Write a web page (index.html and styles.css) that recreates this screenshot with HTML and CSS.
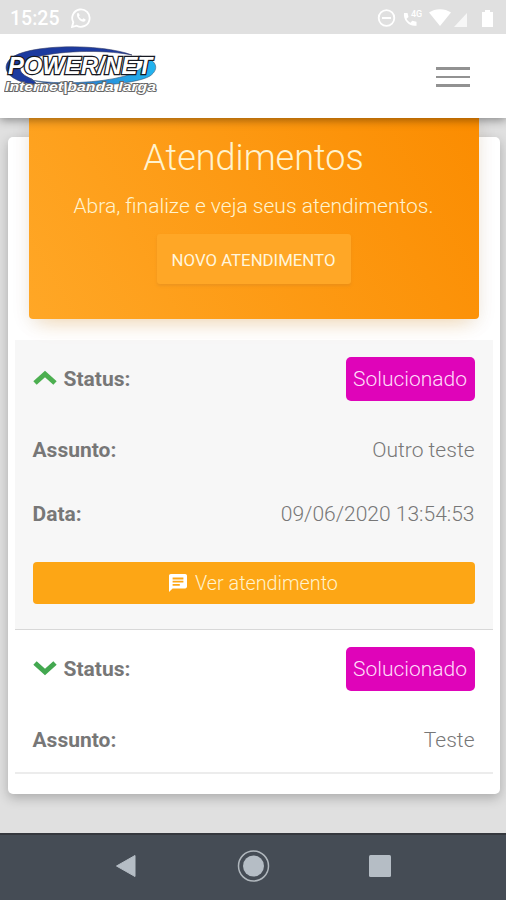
FILE: index.html
```html
<!DOCTYPE html>
<html lang="pt-BR">
<head>
    <meta charset="UTF-8">
    <meta name="viewport" content="width=device-width, initial-scale=1.0">
    <title>Atendimentos</title>
    <link rel="stylesheet" href="styles.css">
</head>
<body>
    <div class="status-bar">
        <span class="clock">15:25</span>
        <svg class="whatsapp" width="20" height="20" viewBox="0 0 20 20">
            <path d="M1 19l1.3-4.7A8.7 8.7 0 1 1 5.7 17.700Z" fill="none" stroke="#fff" stroke-width="1.8"/>
            <path d="M6.200 5.400c1-1 1.700-.5 2.500 1.900l-.8 1.100c.8 1.500 1.900 2.400 3.400 3.100l1.100-1.200c2.500 1 2.700 1.400 1.800 2.700-2.700 2.500-9.400-2.800-8-7.600z" fill="#fff"/>
        </svg>
        <svg class="status-icons" width="120" height="22" viewBox="0 0 120 22">
            <circle cx="11.500" cy="11" r="7.800" fill="none" stroke="#fff" stroke-width="1.8"/>
            <path d="M7 11h9" stroke="#fff" stroke-width="2"/>
            <path d="M29 6h3.500l1 4-2 1.700c1 1.900 2 3 4 4l1.700-2 4.300 1v4C34 20 28 13 29 6z" fill="#fff"/>
            <text x="36" y="10" class="net-label">4G</text>
            <path d="M54 5.500c6-4.500 16-4.500 22 0L65 19z" fill="#fff"/>
            <path d="M79 20L92 6v14z" fill="#fff" opacity=".75"/>
            <path d="M107 5h3V3h5v2h3v15h-11z" fill="#fff"/>
        </svg>
    </div>

    <header class="navbar">
        <svg class="logo" width="156" height="50" viewBox="0 0 156 50">
            <defs>
                <linearGradient id="swoosh" x1="0" x2="1">
                    <stop offset="0" stop-color="#173099"/>
                    <stop offset=".4" stop-color="#2a7fd0"/>
                    <stop offset="1" stop-color="#21b5f0"/>
                </linearGradient>
            </defs>
            <path d="M128 10C96-2 22-1 6 14-6 27 11 38 34 40l-6-6C12 28 12 19 30 13 50 6 98 4 128 10z" fill="#1c3a9f" stroke="#343d66" stroke-width=".6"/>
            <path d="M136 11c17 3 20 13 10 20-15 9-78 14-119 4 26 5 70 3 94-4 19-6 23-14 15-20z" fill="url(#swoosh)" stroke="#345779" stroke-width=".6"/>
            <text x="4" y="29" textLength="144" lengthAdjust="spacingAndGlyphs" class="logo-name">POWER/NET</text>
            <text x="1" y="46" textLength="151" lengthAdjust="spacingAndGlyphs" class="logo-sub">Internet|banda larga</text>
        </svg>
        <div class="menu-toggle">
            <span></span>
            <span></span>
            <span></span>
        </div>
    </header>

    <main class="content">
        <section class="card">
            <div class="card-header">
                <h1>Atendimentos</h1>
                <p>Abra, finalize e veja seus atendimentos.</p>
                <a class="btn-novo" href="#">NOVO ATENDIMENTO</a>
            </div>

            <div class="ticket ticket-open">
                <div class="row row-status">
                    <svg class="chevron" width="24" height="16" viewBox="0 0 24 16">
                        <path d="M2 13L12 4 22 13" fill="none" stroke="#4caf50" stroke-width="5"/>
                    </svg>
                    <strong>Status:</strong>
                    <span class="badge">Solucionado</span>
                </div>
                <div class="row">
                    <strong>Assunto:</strong>
                    <span class="value">Outro teste</span>
                </div>
                <div class="row">
                    <strong>Data:</strong>
                    <span class="value">09/06/2020 13:54:53</span>
                </div>
                <a class="btn-ver" href="#">
                    <svg width="18" height="18" viewBox="2 2 20 20">
                        <path d="M20 2H4c-1.100 0-2 .9-2 2v18l4-4h14c1.100 0 2-.9 2-2V4c0-1.100-.9-2-2-2zM6 6h12v2H6zm0 3.500h12v2H6zM6 13h8v2H6z" fill="#fff" fill-rule="evenodd"/>
                    </svg>
                    Ver atendimento
                </a>
            </div>

            <div class="ticket">
                <div class="row row-status">
                    <svg class="chevron" width="24" height="16" viewBox="0 0 24 16">
                        <path d="M2 3l10 9L22 3" fill="none" stroke="#43a850" stroke-width="5"/>
                    </svg>
                    <strong>Status:</strong>
                    <span class="badge">Solucionado</span>
                </div>
                <div class="row">
                    <strong>Assunto:</strong>
                    <span class="value">Teste</span>
                </div>
            </div>
        </section>
    </main>

    <nav class="android-nav">
        <svg width="24" height="24" viewBox="0 0 24 24">
            <path d="M2.500 12L21 1.500v21z" fill="#b5bdc5" stroke="#b5bdc5" stroke-linejoin="round"/>
        </svg>
        <svg width="34" height="34" viewBox="0 0 34 34">
            <circle cx="17.500" cy="17" r="15" fill="none" stroke="#b0b7bd" stroke-width="1.500"/>
            <circle cx="17.500" cy="17" r="10.500" fill="#b5bdc5"/>
        </svg>
        <svg width="24" height="24" viewBox="0 0 24 24">
            <rect x="1" y="1" width="22" height="22" rx="1.500" fill="#b5bdc5"/>
        </svg>
    </nav>
</body>
</html>
```

FILE: styles.css
```css
* {
    margin: 0;
    padding: 0;
    box-sizing: border-box;
}

body {
    width: 506px;
    height: 900px;
    overflow: hidden;
    display: flex;
    flex-direction: column;
    font-family: Roboto, sans-serif;
    font-size: 20px;
    font-weight: 300;
    color: #777;
    background-color: #e0e0e0;
}

a {
    text-decoration: none;
}

/* barra de status */
.status-bar {
    position: relative;
    z-index: 3;
    height: 34px;
    flex: none;
    display: flex;
    align-items: center;
    padding: 2px 11px 0 10px;
    background-color: #e0e0e0;
    color: #fff;
}

.clock {
    font-size: 19.5px;
    font-weight: 500;
}

.whatsapp {
    margin-left: 12px;
}

.status-icons {
    margin-left: auto;
}

.net-label {
    font-size: 9px;
    font-weight: 500;
    fill: #fff;
}

/* topo */
.navbar {
    position: relative;
    z-index: 2;
    height: 84px;
    flex: none;
    display: flex;
    justify-content: space-between;
    align-items: center;
    padding: 0 36px 0 4px;
    background-color: #fff;
    box-shadow: 0 2px 9px rgba(0, 0, 0, 0.4);
}

.logo {
    margin-bottom: 12px;
}

.logo-name {
    font-family: "Liberation Sans", sans-serif;
    font-size: 24px;
    font-weight: bold;
    font-style: italic;
    fill: #fff;
    stroke: #171922;
    stroke-width: 2.6px;
    paint-order: stroke;
}

.logo-sub {
    font-family: "Liberation Sans", sans-serif;
    font-size: 13px;
    font-weight: bold;
    font-style: italic;
    fill: #fff;
    stroke: #666;
    stroke-width: 1.8px;
    paint-order: stroke;
}

.menu-toggle {
    width: 34px;
    display: flex;
    flex-direction: column;
    gap: 6px;
    margin-top: 2px;
}

.menu-toggle span {
    height: 2.5px;
    background-color: #929292;
}

/* conteudo */
.content {
    flex: 1;
    padding: 19px 6.5px 0 7.5px;
}

.card {
    height: 657px;
    padding: 0 7px;
    background-color: #fff;
    border-radius: 5px;
    box-shadow: 0 4px 12px rgba(0, 0, 0, 0.24);
}

.card-header {
    position: relative;
    top: -30px;
    height: 212px;
    margin: 0 14px -9px;
    padding-top: 29px;
    text-align: center;
    color: #fff3ce;
    border-radius: 4px;
    background: linear-gradient(60deg, #ffa726, #fb8c00);
    box-shadow: 0 12px 20px -10px rgba(255, 152, 0, 0.28), 0 4px 20px rgba(0, 0, 0, 0.08);
}

.card-header h1 {
    font-size: 36px;
    font-weight: 300;
    line-height: 44px;
}

.card-header p {
    margin-top: 14px;
    font-size: 21px;
    line-height: 24px;
}

.btn-novo {
    display: inline-block;
    width: 194px;
    height: 50px;
    margin-top: 16px;
    font-size: 16.8px;
    font-weight: 400;
    line-height: 53px;
    color: #fff6dd;
    background-color: #ffa726;
    border-radius: 3px;
    box-shadow: 0 2px 3px rgba(200, 125, 40, 0.3);
}

.ticket {
    border-bottom: 2px solid #ececec;
}

.ticket-open {
    height: 290px;
    background-color: #f7f7f7;
    border-bottom: 1px solid #d8d8d8;
}

.row {
    height: 64px;
    display: flex;
    align-items: center;
    padding: 0 18px;
}

.row strong {
    font-size: 21px;
    font-weight: 700;
}

.row-status {
    height: 78px;
}

.chevron {
    margin: 0 7px 2px 0;
}

.value {
    margin-left: auto;
    font-size: 21px;
}

.badge {
    margin-left: auto;
    width: 129px;
    line-height: 44px;
    text-align: center;
    font-size: 21px;
    color: #ffdcfa;
    background-color: #df04b9;
    border-radius: 5px;
}

.btn-ver {
    height: 42px;
    margin: 16px 18px 0;
    display: flex;
    align-items: center;
    justify-content: center;
    gap: 8px;
    font-size: 19.8px;
    color: #fff3ce;
    background-color: #fda615;
    border-radius: 4px;
}

/* botoes do android */
.android-nav {
    height: 67px;
    flex: none;
    display: flex;
    align-items: center;
    justify-content: space-between;
    padding: 0 114px 3px;
    background-color: #454c55;
    border-top: 2px solid #35383e;
}
```
